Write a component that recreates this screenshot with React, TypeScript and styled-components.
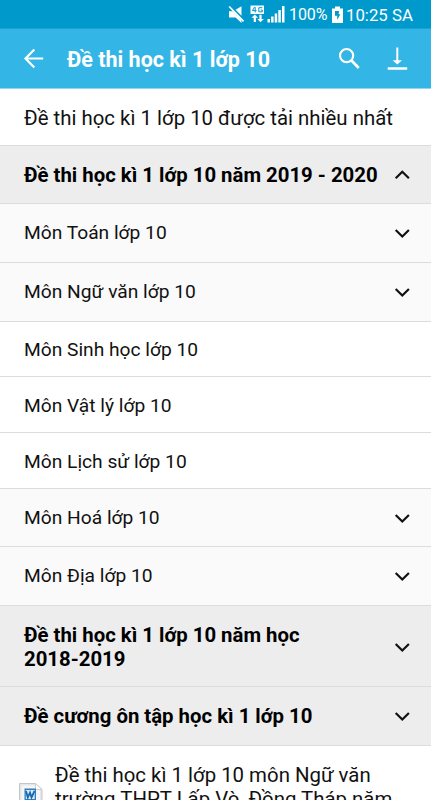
import React from 'react';
import styled, { createGlobalStyle } from 'styled-components';

const GlobalStyle = createGlobalStyle`
  * { box-sizing: border-box; }
  html, body { margin: 0; padding: 0; overflow: hidden; }
  body { font-family: Roboto, "Noto Sans", sans-serif; color: #111; background: #fff; }
`;

const Screen = styled.div`
  width: 431px;
  height: 800px;
  overflow: hidden;
  display: flex;
  flex-direction: column;
`;

const StatusBar = styled.div`
  flex: none;
  height: 29px;
  padding: 1px 19px 0 0;
  display: flex;
  align-items: center;
  justify-content: flex-end;
  background: #0099cc;
  border-bottom: 1px solid #1ba3d5;
  color: #fff;
`;

const StatusIcons = styled.svg`
  display: block;
  flex: none;
`;

const Percent = styled.span`
  width: 38px;
  margin: 0 4px 0 3px;
  font-size: 16px;
  letter-spacing: -0.1px;
  white-space: nowrap;
`;

const Clock = styled.span`
  width: 66px;
  margin-left: 2px;
  font-size: 16.8px;
  white-space: nowrap;
`;

const AppBar = styled.header`
  flex: none;
  height: 60px;
  padding: 0 20px;
  display: flex;
  align-items: center;
  background: #33b5e5;
  border-bottom: 1px solid #8fd6f0;
  color: #fff;
`;

const Title = styled.h1`
  flex: 1;
  margin: 3px 0 0 20px;
  font-size: 21.5px;
  line-height: 28px;
  font-weight: 700;
  white-space: nowrap;
`;

const IconButton = styled.button<{ $gap?: number }>`
  display: flex;
  margin: 0 0 0 ${(p) => p.$gap ?? 0}px;
  padding: 0;
  border: 0;
  background: none;
  color: inherit;
`;

type Tone = 'plain' | 'group' | 'section';

const tones: Record<Tone, string> = { plain: '#ffffff', group: '#fafafa', section: '#ededed' };

const Row = styled.div<{ $tone: Tone; $height: number }>`
  flex: none;
  height: ${(p) => p.$height}px;
  padding: ${(p) => (p.$tone === 'plain' || p.$height > 80 ? 2 : 0)}px 19px 0 24px;
  display: flex;
  align-items: center;
  justify-content: space-between;
  background: ${(p) => tones[p.$tone]};
  border-bottom: 1px solid #dcdcdc;
`;

const Label = styled.span<{ $bold: boolean; $size: number }>`
  font-size: ${(p) => p.$size}px;
  line-height: 24px;
  font-weight: ${(p) => (p.$bold ? 700 : 400)};
  color: ${(p) => (p.$bold ? '#000' : '#111')};
  white-space: pre-line;
`;

const DocumentRow = styled.div`
  flex: none;
  padding: 17px 19px 0 19px;
  display: flex;
  align-items: flex-start;
`;

const DocumentIcon = styled.svg`
  flex: none;
  margin: 20px 12px 0 0;
`;

const Chevron = ({ up = false }: { up?: boolean }) => (
  <svg width="20" height="20" viewBox="0 0 20 20" fill="none" stroke="#111" strokeWidth="2.2">
    <path d={up ? 'M3.7 13.3 10.3 6.8 16.9 13.3' : 'M3.7 7 10.3 13.5 16.9 7'} />
  </svg>
);

interface Item {
  text: string;
  tone: Tone;
  height: number;
  size: number;
  chevron?: 'up' | 'down';
}

const items: Item[] = [
  { text: 'Đề thi học kì 1 lớp 10 được tải nhiều nhất', tone: 'plain', height: 57, size: 20.4 },
  { text: 'Đề thi học kì 1 lớp 10 năm 2019 - 2020', tone: 'section', height: 58, size: 20.35, chevron: 'up' },
  { text: 'Môn Toán lớp 10', tone: 'group', height: 59, size: 19.2, chevron: 'down' },
  { text: 'Môn Ngữ văn lớp 10', tone: 'group', height: 59, size: 19.2, chevron: 'down' },
  { text: 'Môn Sinh học lớp 10', tone: 'plain', height: 55, size: 19.2 },
  { text: 'Môn Vật lý lớp 10', tone: 'plain', height: 56, size: 19.2 },
  { text: 'Môn Lịch sử lớp 10', tone: 'plain', height: 56, size: 19.2 },
  { text: 'Môn Hoá lớp 10', tone: 'group', height: 58, size: 19.2, chevron: 'down' },
  { text: 'Môn Địa lớp 10', tone: 'group', height: 59, size: 19.2, chevron: 'down' },
  { text: 'Đề thi học kì 1 lớp 10 năm học\n2018-2019', tone: 'section', height: 81, size: 20.35, chevron: 'down' },
  { text: 'Đề cương ôn tập học kì 1 lớp 10', tone: 'section', height: 59, size: 20.35, chevron: 'down' },
];

export default function App() {
  return (
    <Screen>
      <GlobalStyle />
      <StatusBar>
        <StatusIcons width="58" height="20" viewBox="0 0 58 20" fill="#fff">
          <path d="M1 6.3h3.8l8.7 8.7v3L7.6 12.4H1zM7.6 4.8 13.5 1.2v9.5z" />
          <path d="M1.2 1.5 15.6 16.4" stroke="#fff" strokeWidth="1.7" />
          <path d="M22.5 .5H36V9H22.5z" />
          <path d="M26.6 2 24.4 5.6h4.1M27.2 2.2v5.3M34.3 2.7h-3.5v4.1h3.5V5h-1.6" fill="none" stroke="#0099cc" />
          <path d="M26.8 9.6 30 12.8h-2.1v4.2h-2.2v-4.2h-2.2zM32.5 17.3 29.3 14h2.1V9.8h2.2V14h2.2z" />
          <path d="M39.5 14H42v3.4h-2.5zM43.1 11.5h2.5v5.9h-2.5zM46.7 8.5h2.5v8.9h-2.5zM50.3 5h2.5v12.4h-2.5zM54 1h2.5v16.4H54z" />
        </StatusIcons>
        <Percent>100%</Percent>
        <StatusIcons width="13" height="20" viewBox="0 0 13 20">
          <path fill="#fff" d="M4 1.5h5v2h3V18H1V3.5h3z" />
          <path fill="#0099cc" d="M8 6H4v4.8h2.2V15l3.1-5.7H7.6z" />
        </StatusIcons>
        <Clock>10:25 SA</Clock>
      </StatusBar>
      <AppBar>
        <IconButton aria-label="Back">
          <svg width="27" height="27" viewBox="0 0 27 27" fill="none" stroke="#fff" strokeWidth="2.2">
            <path d="M14.3 4.5 5.5 13.5 14.3 22.5M5.5 13.5H23.2" />
          </svg>
        </IconButton>
        <Title>Đề thi học kì 1 lớp 10</Title>
        <IconButton aria-label="Search">
          <svg width="28" height="28" viewBox="0 0 28 28" fill="none" stroke="#fff" strokeWidth="2.2">
            <circle cx="11.6" cy="10.6" r="6.6" />
            <path d="M16.2 15.3 23.8 23" strokeWidth="2.7" />
          </svg>
        </IconButton>
        <IconButton aria-label="Download" $gap={20}>
          <svg width="28" height="28" viewBox="0 0 28 28" fill="#fff">
            <path d="M13.3 2.5h2v12.7H19l-4.7 4.3-4.7-4.3h3.7zM4.7 22.2h19.5v2.6H4.7z" />
          </svg>
        </IconButton>
      </AppBar>
      {items.map((item) => (
        <Row key={item.text} $tone={item.tone} $height={item.height}>
          <Label $bold={item.tone === 'section'} $size={item.size}>{item.text}</Label>
          {item.chevron && <Chevron up={item.chevron === 'up'} />}
        </Row>
      ))}
      <DocumentRow>
        <DocumentIcon width="24" height="28" viewBox="0 0 24 28">
          <path d="M.5.5h16l6.5 6V28H.5z" fill="#e4e6e7" stroke="#c4c7c9" />
          <path d="M2.5 2.5h13l5.500 5V28H2.5z" fill="#f6f6f6" />
          <path d="M16.5.5v6H23z" fill="#fff" stroke="#c4c7c9" strokeWidth=".8" />
          <path d="M5.5 5.5H17v13H5.5z" fill="#2f7fc1" />
          <path d="M6.8 7h8.900v9H6.8z" fill="#d9ebf8" />
          <path d="m7 8 1.8 6.5L11 9.500l1.5 5L15.5 8" fill="none" stroke="#1769ad" strokeWidth="1.8" />
        </DocumentIcon>
        <Label $bold={false} $size={20.4}>{'Đề thi học kì 1 lớp 10 môn Ngữ văn\ntrường THPT Lấp Vò, Đồng Tháp năm'}</Label>
      </DocumentRow>
    </Screen>
  );
}
